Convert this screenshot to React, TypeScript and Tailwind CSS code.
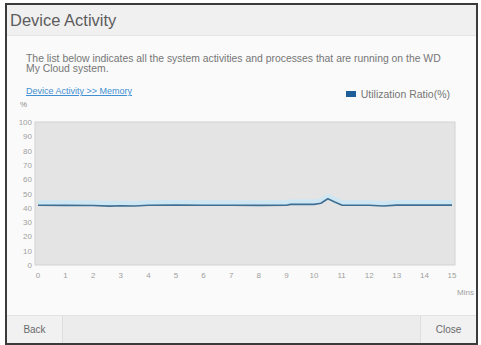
import type { JSX } from 'react'

// page coords -> svg coords: svg starts at page x=7, y=100
const PL = 28 // plot left
const PR = 448 // plot right
const PT = 22 // plot top
const PB = 165 // plot bottom
const yOf = (v: number) => PB - (v / 100) * (PB - PT)
const xLab = (i: number) => 31 + i * 27.6

const series: [number, number][] = [
  [0, 41.8], [1, 41.7], [2, 41.6], [2.6, 41.2], [3, 41.4], [3.5, 41.3], [4, 41.8], [5, 41.9],
  [6, 41.8], [7, 41.8], [8, 41.7], [9, 41.8], [9.15, 42.4], [10, 42.4], [10.25, 43.2],
  [10.5, 46.3], [10.75, 44], [11, 41.9], [12, 41.8], [12.5, 41.3], [13, 41.9], [14, 41.9], [15, 41.9],
]

const linePts = series.map(([t, v]) => `${xLab(t)},${yOf(v)}`).join(' ')
const glowPts = series.map(([t, v]) => `${xLab(t)},${yOf(v) - 2.5}`).join(' ')

const Chart = (): JSX.Element => (
  <svg width="469" height="215" viewBox="0 0 469 215" className="block">
    <text x="13" y="7" fontSize="8" fill="#8a8a8a" fontFamily="Liberation Sans, Arial, sans-serif">%</text>
    <rect x={PL} y={PT} width={PR - PL} height={PB - PT} fill="#e4e4e4" stroke="#d2d2d2" strokeWidth="1" />
    {Array.from({ length: 11 }, (_, i) => i * 10).map((v) => (
      <text
        key={v}
        x="25"
        y={yOf(v) + 3}
        fontSize="8"
        textAnchor="end"
        fill="#a0a0a0"
        fontFamily="Liberation Sans, Arial, sans-serif"
      >
        {v}
      </text>
    ))}
    {Array.from({ length: 16 }, (_, i) => i).map((i) => (
      <text
        key={i}
        x={xLab(i)}
        y="178"
        fontSize="8"
        textAnchor="middle"
        fill="#a0a0a0"
        fontFamily="Liberation Sans, Arial, sans-serif"
      >
        {i}
      </text>
    ))}
    <text x="467" y="195" fontSize="8" textAnchor="end" fill="#a0a0a0" fontFamily="Liberation Sans, Arial, sans-serif">
      Mins
    </text>
    <polyline points={glowPts} fill="none" stroke="#cfe6f3" strokeWidth="5" strokeLinejoin="round" />
    <polyline points={linePts} fill="none" stroke="#3f6f92" strokeWidth="1.6" strokeLinejoin="round" />
  </svg>
)

const App = (): JSX.Element => (
  <div
    className="h-[345px] w-[481px] bg-white pt-[3px] pl-[5px] pr-[3px] overflow-hidden"
    style={{ fontFamily: '"Liberation Sans", Arial, sans-serif' }}
  >
    <div className="flex h-[342px] flex-col border-2 border-[#3b3b3b] bg-[#fafafa]">
      <div className="flex h-[31px] shrink-0 items-center border-b border-[#e4e4e4] bg-[#f0f0f0] pl-[3px] text-[16.5px] text-[#5c5c5c]">
        Device Activity
      </div>
      <div className="flex flex-1 flex-col">
        <p className="pl-[19px] pt-[18px] text-[10.4px] leading-[10px] text-[#767676]">
          The list below indicates all the system activities and processes that are running on the WD
          <br />
          My Cloud system.
        </p>
        <div className="mt-[12px] flex items-end justify-between pl-[19px] pr-[26px]">
          <span className="pb-[4px] text-[9px] leading-[10px] text-[#3f8fd2] underline">
            Device Activity &gt;&gt; Memory
          </span>
          <span className="flex items-center gap-[5px] text-[10.5px] leading-[12px] text-[#767676]">
            <span className="h-[6px] w-[10px] bg-[#1f5f99]"></span>
            Utilization Ratio(%)
          </span>
        </div>
        <Chart />
      </div>
      <div className="flex h-[28px] shrink-0 items-stretch justify-between border-t border-[#e2e2e2] bg-[#ececec]">
        <button className="w-[56px] border-r border-[#dedede] bg-[#f1f1f1] text-[10px] text-[#6a6a6a]">Back</button>
        <button className="w-[56px] border-l border-[#dedede] bg-[#f1f1f1] text-[10px] text-[#6a6a6a]">Close</button>
      </div>
    </div>
  </div>
)

export default App
